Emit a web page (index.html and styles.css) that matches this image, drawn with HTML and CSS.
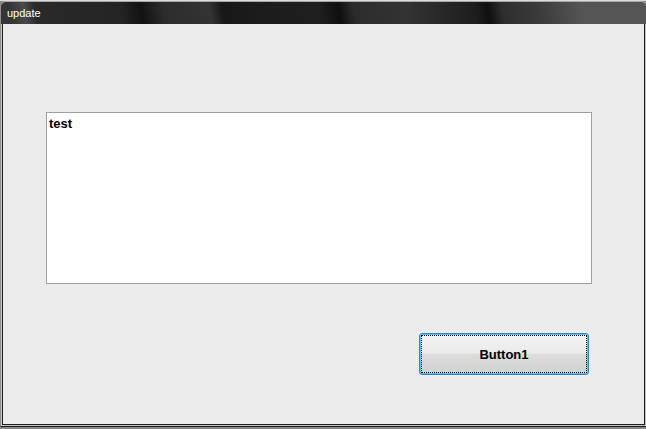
FILE: index.html
```html
<!DOCTYPE html>
<html>
<head>
<meta charset="utf-8">
<link rel="stylesheet" href="styles.css">
</head>
<body>
<div class="window">
  <div class="titlebar"><span class="title">update</span></div>
  <div class="frame">
    <div class="client">
      <div class="textbox">test</div>
      <div class="btn-row">
        <button class="btn"><span class="focus">Button1</span></button>
      </div>
    </div>
  </div>
</div>
</body>
</html>
```
FILE: styles.css
```css
html, body {
  margin: 0;
  padding: 0;
  width: 646px;
  height: 429px;
  overflow: hidden;
}
body {
  background: linear-gradient(#dcdcdc 0, #dcdcdc 1px, #878787 1px);
  font-family: "Liberation Sans", Arial, sans-serif;
}
.window {
  box-sizing: border-box;
  width: 647px;
  height: 426px;
  margin-top: 1px;
  display: flex;
  flex-direction: column;
  border: 1px solid #8e8e8e;
  border-top-color: #a8a8a8;
  border-bottom-color: #1e1e1e;
  border-radius: 6px 6px 0 0;
  background: linear-gradient(80deg,
    #3a3a3a 0px, #343434 80px, #4a4a4a 95px, #2a2a2a 106px,
    #242424 190px, #121212 210px, #2c2c2c 232px, #333 278px,
    #181818 290px, #1c1c1c 330px, #1f1f1f 385px, #0f0f0f 405px,
    #2c2c2c 420px, #333 470px, #1e1e1e 538px, #101010 552px,
    #2e2e2e 566px, #3a3a3a 600px, #555 645px);
  overflow: hidden;
}
.titlebar {
  height: 22px;
  flex: none;
  display: flex;
  align-items: center;
  padding-left: 6px;
}
.title {
  color: #fff;
  font-size: 11px;
  line-height: 13px;
  padding-top: 1px;
}
.frame {
  flex: 1;
  background: #c4c4c4;
  padding: 0 1px 1px;
  display: flex;
}
.client {
  flex: 1;
  background: #ebebeb;
  border: 1px solid #1e1e1e;
  border-top: none;
  padding: 88px 0 0 43px;
  display: flex;
  flex-direction: column;
  align-items: flex-start;
}
.textbox {
  box-sizing: border-box;
  width: 546px;
  height: 172px;
  background: #fff;
  border: 1px solid #a0a0a0;
  font-weight: bold;
  font-size: 13px;
  line-height: 15px;
  padding: 3px 0 0 2px;
  color: #000;
}
.btn-row {
  margin-top: 49px;
  padding-left: 373px;
}
.btn {
  box-sizing: border-box;
  width: 170px;
  height: 42px;
  margin: 0;
  padding: 1px;
  border: 1px solid #3a86c2;
  border-radius: 3px;
  box-shadow: inset 0 0 0 1px #4fc4f2;
  background: linear-gradient(#f3f3f3 0%, #ebebeb 48%, #dddddd 50%, #cfcfcf 100%);
  font-family: "Liberation Sans", Arial, sans-serif;
  font-weight: bold;
  font-size: 13px;
  color: #000;
  display: flex;
}
.focus {
  flex: 1;
  border: 1px dotted #000;
  display: flex;
  align-items: center;
  justify-content: center;
  padding-top: 1px;
}
```
